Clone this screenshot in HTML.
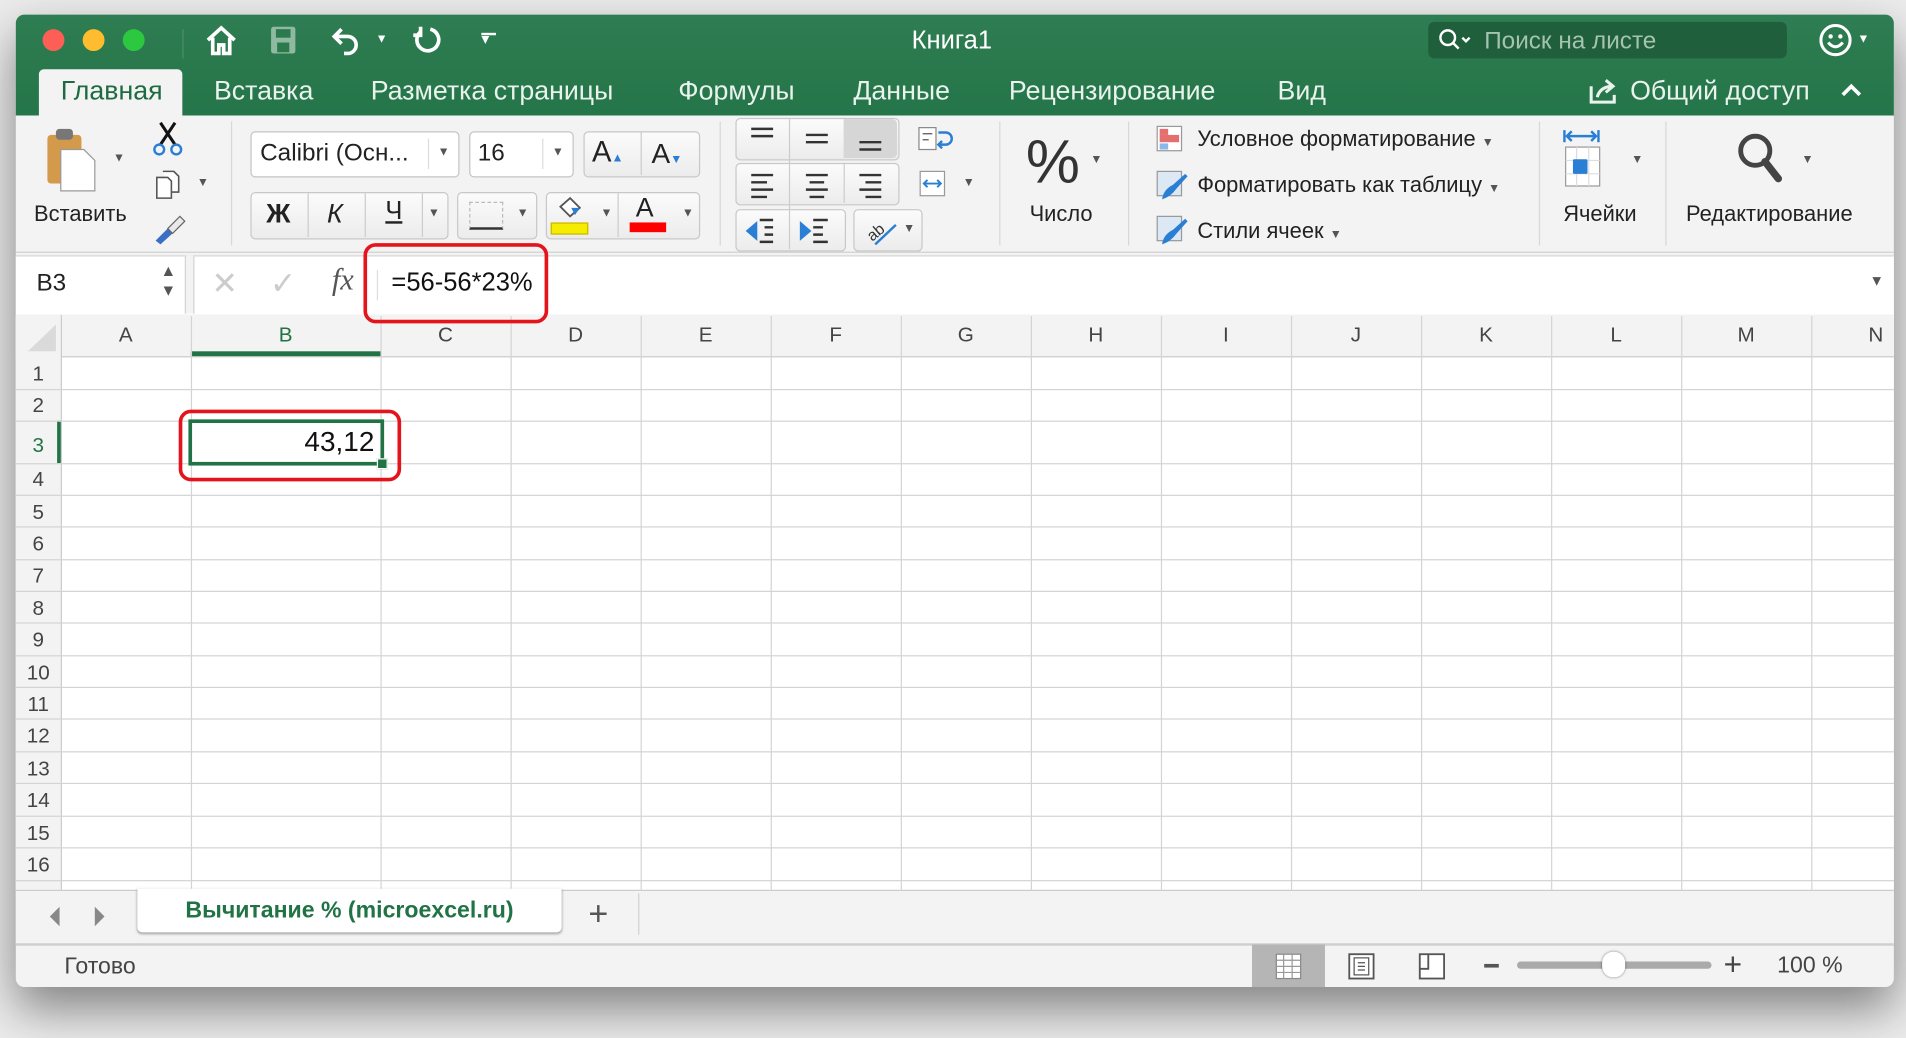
<!DOCTYPE html>
<html><head><meta charset="utf-8"><style>
html,body{margin:0;padding:0;width:1906px;height:1038px;overflow:hidden;background:#ececec}
#s{position:absolute;left:0;top:0;width:1568px;height:854px;transform:scale(1.21556);transform-origin:0 0;font-family:"Liberation Sans","DejaVu Sans",sans-serif;color:#222}
.a{position:absolute}
.t{position:absolute;white-space:nowrap}
.win{left:13px;top:12px;width:1545px;height:800px;border-radius:7px;background:#f3f3f3;box-shadow:0 18px 40px rgba(0,0,0,.45);overflow:hidden}
.tab{top:62px;font-size:22px;color:#e9f2ec}
.hl{position:absolute;left:13px;width:1545px;height:1px;background:#d4d4d4}
.vl{position:absolute;top:260px;height:472px;width:1px;background:#d4d4d4}
.ch{position:absolute;top:266px;font-size:17px;color:#444;text-align:center}
.rh{position:absolute;left:13px;width:37px;text-align:center;font-size:17px;color:#444}
.lbl{font-size:18px;color:#222}
.box{position:absolute;background:#fff;border:1px solid #c4c4c4;border-radius:4px}
.btn{position:absolute;background:linear-gradient(#fbfbfb,#ececec);border:1px solid #c8c8c8;border-radius:4px}
.car{position:absolute;font-size:10px;color:#555}
.sep{position:absolute;top:100px;width:1px;height:102px;background:#d8d8d8}
</style></head><body><div id="s">
<div class="a win"></div>
<div class="a" style="left:13px;top:12px;width:1545px;height:83px;background:linear-gradient(#2f7d52,#247549);border-radius:7px 7px 0 0"></div>
<div class="a" style="left:35px;top:24px;width:18px;height:18px;border-radius:50%;background:#fd5f57"></div>
<div class="a" style="left:68px;top:24px;width:18px;height:18px;border-radius:50%;background:#febc2e"></div>
<div class="a" style="left:101px;top:24px;width:18px;height:18px;border-radius:50%;background:#2bc840"></div>
<div class="a" style="left:150px;top:24px;width:1px;height:24px;background:#4b8f69"></div>
<svg class="a" style="left:168px;top:20px" width="28" height="26"><path d="M3 13 L14 3 L25 13 M7 11 V24 H12 V17 H16 V24 H21 V11" fill="none" stroke="#fff" stroke-width="3"/></svg>
<svg class="a" style="left:221px;top:20px" width="24" height="26"><rect x="2" y="2" width="20" height="22" rx="2" fill="#8fb9a0"/><rect x="6" y="4" width="12" height="7" fill="#2a7a4e"/><rect x="7" y="15" width="10" height="8" fill="#2a7a4e"/></svg>
<svg class="a" style="left:272px;top:20px" width="30" height="28"><path d="M9 4 L3 10 L9 16 M3 10 H14 A7 7 0 0 1 14 24 H11" fill="none" stroke="#fff" stroke-width="3"/></svg>
<div class="t" style="left:309px;top:27px;font-size:10px;color:#fff">▼</div>
<svg class="a" style="left:337px;top:19px" width="28" height="30"><path d="M17 5 A9 9 0 1 1 9 7 M9 3 V10 H3" fill="none" stroke="#fff" stroke-width="3"/></svg>
<div class="t" style="left:396px;top:24px;font-size:13px;color:#fff">▾</div>
<div class="a" style="left:396px;top:27px;width:12px;height:2px;background:#fff"></div>
<div class="t" style="left:750px;top:22px;font-size:21px;color:#fff">Книга1</div>
<div class="a" style="left:1175px;top:18px;width:295px;height:30px;border-radius:5px;background:#1f5f3b"></div>
<svg class="a" style="left:1183px;top:22px" width="32" height="22"><circle cx="8" cy="9" r="6" fill="none" stroke="#fff" stroke-width="2"/><path d="M12 13 L17 18 M20 9 L23 12 L26 9" fill="none" stroke="#fff" stroke-width="2"/></svg>
<div class="t" style="left:1221px;top:23px;font-size:20px;color:#a4c3b0">Поиск на листе</div>
<svg class="a" style="left:1496px;top:19px" width="30" height="30"><circle cx="14" cy="14" r="12" fill="none" stroke="#fff" stroke-width="2.5"/><circle cx="10" cy="11" r="1.8" fill="#fff"/><circle cx="18" cy="11" r="1.8" fill="#fff"/><path d="M8 16 Q14 23 20 16" fill="none" stroke="#fff" stroke-width="2.5"/></svg>
<div class="t" style="left:1528px;top:27px;font-size:10px;color:#fff">▼</div>
<div class="a" style="left:32px;top:57px;width:118px;height:40px;background:#f3f3f3;border-radius:4px 4px 0 0"></div>
<div class="t tab" style="left:50px;color:#1f6b41">Главная</div>
<div class="t tab" style="left:176px">Вставка</div>
<div class="t tab" style="left:305px">Разметка страницы</div>
<div class="t tab" style="left:558px">Формулы</div>
<div class="t tab" style="left:702px">Данные</div>
<div class="t tab" style="left:830px">Рецензирование</div>
<div class="t tab" style="left:1051px">Вид</div>
<svg class="a" style="left:1306px;top:63px" width="28" height="24"><path d="M3 8 V21 H22 V15" fill="none" stroke="#e9f2ec" stroke-width="2.5"/><path d="M8 17 Q10 9 19 8 M15 3 L21 8 L15 13" fill="none" stroke="#e9f2ec" stroke-width="2.5"/></svg>
<div class="t tab" style="left:1341px">Общий доступ</div>
<svg class="a" style="left:1514px;top:68px" width="18" height="12"><path d="M2 10 L9 3 L16 10" fill="none" stroke="#fff" stroke-width="3"/></svg>
<svg class="a" style="left:36px;top:103px" width="46" height="56"><rect x="3" y="8" width="28" height="40" rx="3" fill="#d49a4b"/><rect x="10" y="3" width="14" height="9" rx="3" fill="#777"/><path d="M14 20 H33 L42 29 V54 H14 Z" fill="#fff" stroke="#999"/></svg>
<div class="car" style="left:93px;top:125px">▼</div>
<div class="t lbl" style="left:28px;top:166px">Вставить</div>
<svg class="a" style="left:124px;top:99px" width="28" height="30"><path d="M8 2 L20 20 M20 2 L8 20" stroke="#111" stroke-width="2.5"/><circle cx="7" cy="24" r="4" fill="none" stroke="#2a7fd4" stroke-width="2"/><circle cx="21" cy="24" r="4" fill="none" stroke="#2a7fd4" stroke-width="2"/></svg>
<svg class="a" style="left:126px;top:138px" width="26" height="28"><path d="M3 8 H12 L15 11 V25 H3 Z M8 3 H17 L21 7 V20 H15" fill="#fff" stroke="#555" stroke-width="1.3"/></svg>
<div class="car" style="left:162px;top:145px">▼</div>
<svg class="a" style="left:124px;top:174px" width="30" height="28"><path d="M4 24 L14 14 L18 18 L8 27 Z" fill="#3a6fc4"/><path d="M14 14 L24 4 L28 8 L18 18 Z" fill="#e8e8e8" stroke="#666"/></svg>
<div class="sep" style="left:190px"></div>
<div class="box" style="left:206px;top:108px;width:170px;height:36px"></div>
<div class="t" style="left:214px;top:115px;font-size:20px">Calibri (Осн...</div>
<div class="a" style="left:352px;top:114px;width:1px;height:25px;background:#ddd"></div>
<div class="car" style="left:360px;top:120px">▼</div>
<div class="box" style="left:386px;top:108px;width:84px;height:36px"></div>
<div class="t" style="left:393px;top:115px;font-size:20px">16</div>
<div class="a" style="left:446px;top:114px;width:1px;height:25px;background:#ddd"></div>
<div class="car" style="left:454px;top:120px">▼</div>
<div class="btn" style="left:480px;top:108px;width:94px;height:36px"></div>
<div class="a" style="left:527px;top:109px;width:1px;height:35px;background:#ccc"></div>
<div class="t" style="left:487px;top:112px;font-size:24px">A<span style="font-size:10px;color:#2a7fd4">▲</span></div>
<div class="t" style="left:536px;top:113px;font-size:23px">A<span style="font-size:10px;color:#2a7fd4">▼</span></div>
<div class="btn" style="left:206px;top:158px;width:161px;height:37px"></div>
<div class="a" style="left:253px;top:159px;width:1px;height:36px;background:#ccc"></div>
<div class="a" style="left:300px;top:159px;width:1px;height:36px;background:#ccc"></div>
<div class="a" style="left:347px;top:159px;width:1px;height:36px;background:#ccc"></div>
<div class="t" style="left:219px;top:163px;font-size:22px;font-weight:bold">Ж</div>
<div class="t" style="left:269px;top:163px;font-size:22px;font-style:italic">К</div>
<div class="t" style="left:317px;top:162px;font-size:21px;text-decoration:underline">Ч</div>
<div class="car" style="left:352px;top:170px">▼</div>
<div class="btn" style="left:376px;top:158px;width:64px;height:37px"></div>
<div class="a" style="left:386px;top:166px;width:26px;height:20px;border:1px dashed #bbb;border-bottom:2px solid #333"></div>
<div class="car" style="left:425px;top:170px">▼</div>
<div class="btn" style="left:449px;top:158px;width:125px;height:37px"></div>
<div class="a" style="left:508px;top:159px;width:1px;height:36px;background:#ccc"></div>
<svg class="a" style="left:455px;top:160px" width="28" height="22"><path d="M6 10 L14 3 L22 11 L14 18 Z" fill="#fff" stroke="#555" stroke-width="1.5"/><path d="M15 11 L22 11 L18 17" fill="#2a7fd4"/></svg>
<div class="a" style="left:453px;top:183px;width:29px;height:8px;background:#f5ec00;border:1px solid #c8b800"></div>
<div class="car" style="left:494px;top:170px">▼</div>
<div class="t" style="left:523px;top:158px;font-size:22px">A</div>
<div class="a" style="left:518px;top:183px;width:30px;height:8px;background:#f00"></div>
<div class="car" style="left:561px;top:170px">▼</div>
<div class="sep" style="left:592px"></div>
<div class="btn" style="left:605px;top:97px;width:133px;height:33px"></div>
<div class="a" style="left:694px;top:98px;width:44px;height:32px;background:#d6d6d6;border-radius:0 4px 4px 0"></div>
<div class="btn" style="left:605px;top:134px;width:133px;height:33px"></div>
<div class="btn" style="left:605px;top:172px;width:89px;height:33px"></div>
<div class="btn" style="left:702px;top:172px;width:55px;height:33px"></div>
<div class="a" style="left:649px;top:98px;width:1px;height:107px;background:#ccc"></div>
<div class="a" style="left:694px;top:135px;width:1px;height:32px;background:#ccc"></div>
<svg class="a" style="left:605px;top:97px" width="135" height="110" stroke="#333" stroke-width="2">
<path d="M13 9 H31 M13 15 H31 M58 14 H76 M58 20 H76 M102 20 H120 M102 26 H120"/>
<path d="M13 47 H31 M13 53 H26 M13 59 H31 M13 65 H26 M58 47 H76 M61 53 H73 M58 59 H76 M61 65 H73 M102 47 H120 M107 53 H120 M102 59 H120 M107 65 H120"/>
<path d="M20 84 H31 M24 90 H31 M24 96 H31 M20 102 H31 M64 84 H76 M64 90 H72 M64 96 H72 M64 102 H76" />
<path d="M10 93 L17 87 V99 Z M54 87 L61 93 L54 99 Z" fill="#2a7fd4" stroke="#2a7fd4"/>
<text x="106" y="100" font-size="13" transform="rotate(-40 112 92)" stroke="none" fill="#333" font-family="Liberation Sans">ab</text>
<path d="M115 104 L132 88" stroke="#2a7fd4"/></svg>
<div class="car" style="left:743px;top:183px">▼</div>
<svg class="a" style="left:754px;top:103px" width="30" height="24"><rect x="2" y="2" width="14" height="18" fill="#fff" stroke="#888"/><path d="M5 7 H13 M5 12 H10" stroke="#555"/><path d="M18 6 H24 A5 5 0 0 1 24 16 H19 M21 13 L18 16 L21 19" fill="none" stroke="#2a7fd4" stroke-width="2"/></svg>
<svg class="a" style="left:755px;top:139px" width="26" height="24"><rect x="2" y="2" width="20" height="20" fill="#fff" stroke="#999"/><path d="M5 12 H19 M8 9 L5 12 L8 15 M16 9 L19 12 L16 15" fill="none" stroke="#2a7fd4" stroke-width="1.6"/></svg>
<div class="car" style="left:792px;top:145px">▼</div>
<div class="sep" style="left:822px"></div>
<div class="t" style="left:844px;top:104px;font-size:50px;color:#333">%</div>
<div class="car" style="left:897px;top:126px">▼</div>
<div class="t lbl" style="left:847px;top:166px">Число</div>
<div class="sep" style="left:928px"></div>
<svg class="a" style="left:951px;top:103px" width="24" height="22"><rect x="1" y="1" width="20" height="20" fill="#fff" stroke="#999"/><rect x="3" y="3" width="7" height="5" fill="#e46f6f"/><rect x="3" y="8" width="16" height="6" fill="#e46f6f"/><rect x="3" y="15" width="7" height="5" fill="#8ab8e8"/></svg>
<div class="t lbl" style="left:985px;top:104px">Условное форматирование <span style="font-size:10px;color:#555">▼</span></div>
<svg class="a" style="left:951px;top:140px" width="28" height="26"><rect x="1" y="1" width="20" height="20" fill="#dde8f5" stroke="#999"/><path d="M5 24 Q6 16 14 12 L24 3 L26 5 L17 15 Q12 22 5 24Z" fill="#2a7fd4"/></svg>
<div class="t lbl" style="left:985px;top:142px">Форматировать как таблицу <span style="font-size:10px;color:#555">▼</span></div>
<svg class="a" style="left:951px;top:177px" width="28" height="26"><rect x="1" y="1" width="20" height="20" fill="#dde8f5" stroke="#999"/><path d="M5 24 Q6 16 14 12 L24 3 L26 5 L17 15 Q12 22 5 24Z" fill="#2a7fd4"/></svg>
<div class="t lbl" style="left:985px;top:180px">Стили ячеек <span style="font-size:10px;color:#555">▼</span></div>
<div class="sep" style="left:1266px"></div>
<svg class="a" style="left:1284px;top:104px" width="52" height="54"><path d="M3 3 V13 M31 3 V13 M5 8 H29 M9 4 L5 8 L9 12 M25 4 L29 8 L25 12" fill="none" stroke="#2a7fd4" stroke-width="2"/><rect x="4" y="17" width="28" height="32" fill="#fff" stroke="#999"/><path d="M4 28 H32 M4 39 H32 M13 17 V49 M23 17 V49" stroke="#ddd"/><rect x="10" y="27" width="12" height="12" rx="1" fill="#2a7fd4"/></svg>
<div class="car" style="left:1342px;top:126px">▼</div>
<div class="t lbl" style="left:1286px;top:166px">Ячейки</div>
<div class="sep" style="left:1370px"></div>
<svg class="a" style="left:1428px;top:108px" width="40" height="48"><circle cx="16" cy="16" r="12" fill="none" stroke="#444" stroke-width="4"/><path d="M24 25 L35 39" stroke="#444" stroke-width="6" stroke-linecap="round"/></svg>
<div class="car" style="left:1482px;top:126px">▼</div>
<div class="t lbl" style="left:1387px;top:166px">Редактирование</div>
<div class="a" style="left:13px;top:207px;width:1545px;height:1px;background:#d0d0d0"></div>
<div class="a" style="left:13px;top:210px;width:1545px;height:48px;background:#fff;border-top:1px solid #d4d4d4;border-bottom:1px solid #c8c8c8"></div>
<div class="a" style="left:152px;top:210px;width:6px;height:48px;background:#f3f3f3;border-left:1px solid #d4d4d4;border-right:1px solid #d4d4d4"></div>
<div class="t" style="left:30px;top:222px;font-size:20px;color:#222">B3</div>
<div class="t" style="left:132px;top:215px;font-size:13px;color:#555;line-height:16px">▲<br>▼</div>
<div class="t" style="left:174px;top:218px;font-size:26px;color:#ccc">✕</div>
<div class="t" style="left:222px;top:218px;font-size:26px;color:#ccc">✓</div>
<div class="t" style="left:273px;top:217px;font-size:25px;font-family:'Liberation Serif',serif;font-style:italic;color:#555">fx</div>
<div class="a" style="left:310px;top:222px;width:1px;height:25px;background:#ddd"></div>
<div class="t" style="left:322px;top:221px;font-size:21px;color:#111">=56-56*23%</div>
<div class="t" style="left:1538px;top:224px;font-size:12px;color:#555">▼</div>
<div class="a" style="left:13px;top:259px;width:1545px;height:473px;background:#fff"></div>
<div class="a" style="left:13px;top:259px;width:1545px;height:34px;background:#f3f3f3;border-bottom:1px solid #ccc"></div>
<div class="a" style="left:13px;top:259px;width:37px;height:473px;background:#f3f3f3;border-right:1px solid #ccc"></div>
<svg class="a" style="left:20px;top:265px" width="28" height="26"><path d="M26 2 V24 H3 Z" fill="#dadada"/></svg>
<div class="a" style="left:157px;top:289px;width:156px;height:4px;background:#217346"></div>
<div class="a" style="left:47px;top:346px;width:3px;height:35px;background:#217346"></div>
<div class="vl" style="left:157px"></div><div class="vl" style="left:313px"></div><div class="vl" style="left:420px"></div><div class="vl" style="left:527px"></div><div class="vl" style="left:634px"></div><div class="vl" style="left:741px"></div><div class="vl" style="left:848px"></div><div class="vl" style="left:955px"></div><div class="vl" style="left:1062px"></div><div class="vl" style="left:1169px"></div><div class="vl" style="left:1276px"></div><div class="vl" style="left:1383px"></div><div class="vl" style="left:1490px"></div>
<div class="hl" style="top:320px"></div><div class="hl" style="top:346px"></div><div class="hl" style="top:381px"></div><div class="hl" style="top:407px"></div><div class="hl" style="top:433px"></div><div class="hl" style="top:460px"></div><div class="hl" style="top:486px"></div><div class="hl" style="top:512px"></div><div class="hl" style="top:539px"></div><div class="hl" style="top:565px"></div><div class="hl" style="top:591px"></div><div class="hl" style="top:618px"></div><div class="hl" style="top:644px"></div><div class="hl" style="top:671px"></div><div class="hl" style="top:697px"></div><div class="hl" style="top:724px"></div>
<div class="ch" style="left:50px;width:107px">A</div><div class="ch" style="left:157px;width:156px;color:#217346">B</div><div class="ch" style="left:313px;width:107px">C</div><div class="ch" style="left:420px;width:107px">D</div><div class="ch" style="left:527px;width:107px">E</div><div class="ch" style="left:634px;width:107px">F</div><div class="ch" style="left:741px;width:107px">G</div><div class="ch" style="left:848px;width:107px">H</div><div class="ch" style="left:955px;width:107px">I</div><div class="ch" style="left:1062px;width:107px">J</div><div class="ch" style="left:1169px;width:107px">K</div><div class="ch" style="left:1276px;width:107px">L</div><div class="ch" style="left:1383px;width:107px">M</div><div class="ch" style="left:1490px;width:107px;text-align:left;padding-left:47px">N</div>
<div class="rh" style="top:298px">1</div><div class="rh" style="top:324px">2</div><div class="rh" style="top:357px;color:#217346">3</div><div class="rh" style="top:385px">4</div><div class="rh" style="top:412px">5</div><div class="rh" style="top:438px">6</div><div class="rh" style="top:464px">7</div><div class="rh" style="top:491px">8</div><div class="rh" style="top:517px">9</div><div class="rh" style="top:544px">10</div><div class="rh" style="top:570px">11</div><div class="rh" style="top:596px">12</div><div class="rh" style="top:623px">13</div><div class="rh" style="top:649px">14</div><div class="rh" style="top:676px">15</div><div class="rh" style="top:702px">16</div>
<div class="a" style="left:155px;top:345px;width:155px;height:32px;border:3px solid #217346"></div>
<div class="a" style="left:310px;top:377px;width:7px;height:7px;background:#217346;border:1px solid #fff"></div>
<div class="t" style="left:200px;top:350px;width:108px;text-align:right;font-size:23px;color:#111">43,12</div>
<div class="a" style="left:299px;top:200px;width:146px;height:60px;border:3px solid #e4141c;border-radius:10px"></div>
<div class="a" style="left:147px;top:337px;width:177px;height:53px;border:3px solid #e4141c;border-radius:10px"></div>
<div class="a" style="left:13px;top:732px;width:1545px;height:43px;background:#f3f3f3;border-top:1px solid #ccc;border-bottom:2px solid #cfcfcf"></div>
<svg class="a" style="left:36px;top:743px" width="56" height="22"><path d="M13 3 L5 11 L13 19 Z M42 3 L50 11 L42 19 Z" fill="#888"/></svg>
<div class="a" style="left:113px;top:731px;width:349px;height:36px;background:#fff;border-radius:0 0 4px 4px;box-shadow:0 1px 2px rgba(0,0,0,.35)"></div>
<div class="t" style="left:113px;top:739px;width:349px;text-align:center;font-size:19px;font-weight:bold;color:#217346">Вычитание % (microexcel.ru)</div>
<div class="t" style="left:484px;top:736px;font-size:28px;color:#555">+</div>
<div class="a" style="left:525px;top:735px;width:1px;height:34px;background:#d0d0d0"></div>
<div class="t" style="left:53px;top:785px;font-size:19px;color:#444">Готово</div>
<div class="a" style="left:1030px;top:777px;width:60px;height:35px;background:#b5b5b5"></div>
<svg class="a" style="left:1048px;top:783px" width="24" height="24"><rect x="2" y="2" width="20" height="20" fill="#fff" stroke="#888"/><path d="M2 7 H22 M2 12 H22 M2 17 H22 M8 2 V22 M15 2 V22" stroke="#999"/></svg>
<svg class="a" style="left:1108px;top:783px" width="24" height="24"><rect x="2" y="2" width="20" height="20" fill="#fff" stroke="#555" stroke-width="1.5"/><rect x="6" y="5" width="12" height="14" fill="none" stroke="#555"/><path d="M9 9 H15 M9 12 H15 M9 15 H15" stroke="#555"/></svg>
<svg class="a" style="left:1166px;top:783px" width="24" height="24"><rect x="2" y="2" width="20" height="20" fill="#fff" stroke="#555" stroke-width="1.5"/><path d="M9 2 V14 H2" fill="none" stroke="#555" stroke-width="1.5"/></svg>
<div class="a" style="left:1221px;top:793px;width:12px;height:3px;background:#555"></div>
<div class="a" style="left:1248px;top:791px;width:160px;height:6px;border-radius:3px;background:#aaa"></div>
<div class="a" style="left:1318px;top:783px;width:19px;height:21px;border-radius:9px;background:#fff;box-shadow:0 0 2px rgba(0,0,0,.5)"></div>
<div class="t" style="left:1418px;top:778px;font-size:26px;color:#444">+</div>
<div class="t" style="left:1462px;top:784px;font-size:19px;color:#444">100 %</div>
</div></body></html>
